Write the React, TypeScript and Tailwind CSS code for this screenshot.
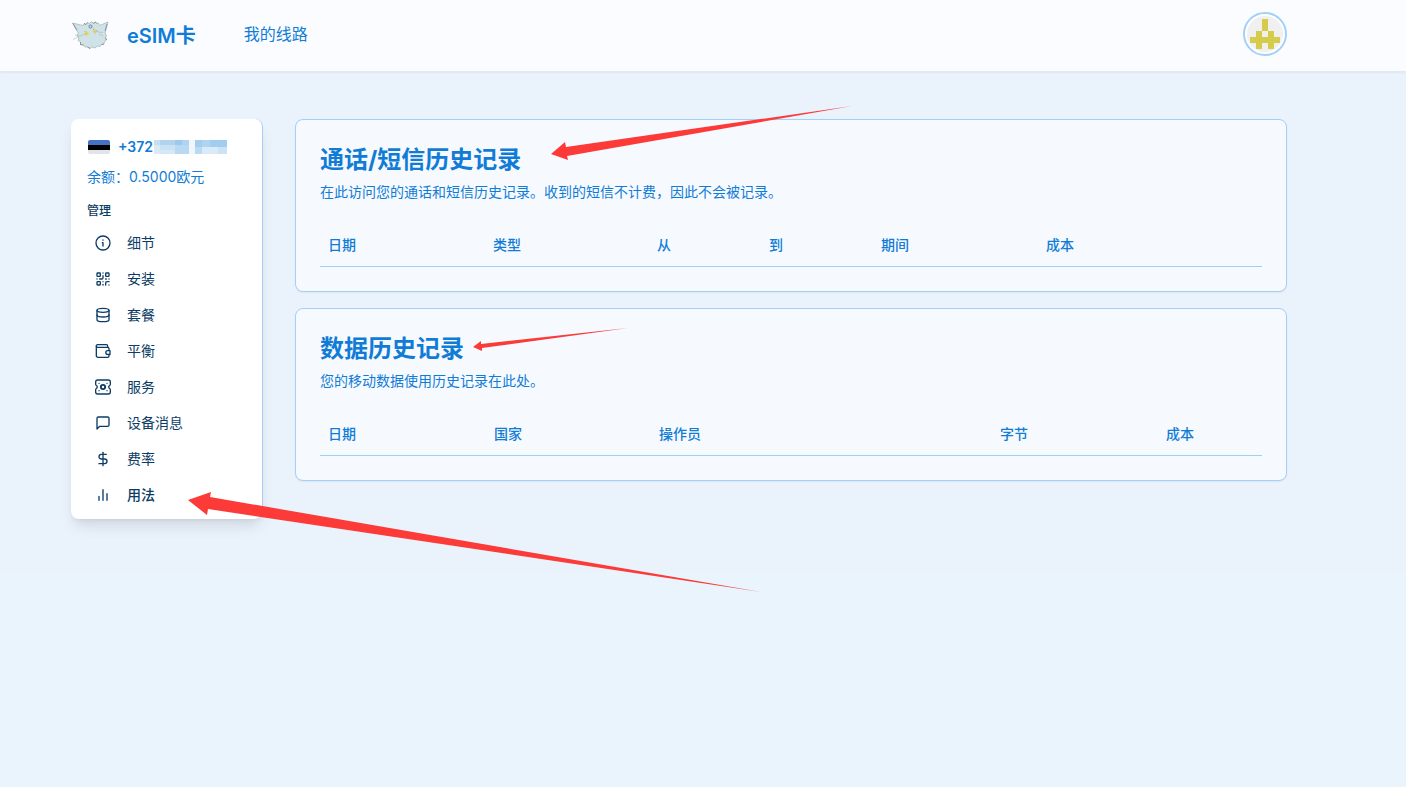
import type { ReactNode } from "react";
import { Database, DollarSign, QrCode } from "lucide-react";

interface NavItem {
  label: string;
  icon: ReactNode;
  active?: boolean;
}

interface Column {
  label: string;
  width: string;
}

interface HistoryCardProps {
  title: string;
  description: string;
  columns: Column[];
}

function LineIcon({ children }: { children: ReactNode }) {
  return (
    <svg
      viewBox="0 0 24 24"
      className="w-4 h-4"
      fill="none"
      stroke="currentColor"
      strokeWidth="2"
      strokeLinecap="round"
      strokeLinejoin="round"
      aria-hidden="true"
    >
      {children}
    </svg>
  );
}

const navItems: NavItem[] = [
  {
    label: "细节",
    icon: (
      <LineIcon>
        <circle cx="12" cy="12" r="10.5" />
        <path d="M11 11.5h1v5M12 7.5v.2" />
      </LineIcon>
    ),
  },
  { label: "安装", icon: <QrCode className="w-4 h-4" /> },
  { label: "套餐", icon: <Database className="w-4 h-4" /> },
  {
    label: "平衡",
    icon: (
      <LineIcon>
        <path d="M19 6V4.500a2 2 0 0 0-2-2H4a2 2 0 0 0-2 2V19a2.500 2.500 0 0 0 2.500 2.500H19a2 2 0 0 0 2-2V18" />
        <path d="M2 4.500a2 2 0 0 0 2 2h15a2 2 0 0 1 2 2v2" />
        <path d="M22.500 11.500H19a2.800 2.800 0 0 0 0 5.600h3.500z" />
      </LineIcon>
    ),
  },
  {
    label: "服务",
    icon: (
      <LineIcon>
        <path d="M4 1.500h16a3 3 0 0 1 3 3V8a2 2 0 0 1-1 1.700 2.600 2.600 0 0 0 0 4.600A2 2 0 0 1 23 16v3.500a3 3 0 0 1-3 3H4a3 3 0 0 1-3-3V16a2 2 0 0 1 1-1.700 2.600 2.600 0 0 0 0-4.600A2 2 0 0 1 1 8V4.500a3 3 0 0 1 3-3z" />
        <circle cx="12" cy="12" r="3.200" strokeWidth="2.800" />
        <path d="M6 6.500h.1M18 6.500h.1M6 17.500h.1M18 17.500h.1" />
      </LineIcon>
    ),
  },
  {
    label: "设备消息",
    icon: (
      <LineIcon>
        <path d="M21 15a2 2 0 0 1-2 2H7l-4 4V5a2 2 0 0 1 2-2h14a2 2 0 0 1 2 2z" />
      </LineIcon>
    ),
  },
  { label: "费率", icon: <DollarSign className="w-4 h-4" /> },
  {
    label: "用法",
    active: true,
    icon: (
      <LineIcon>
        <path d="M18 20V10M12 20V4M6 20v-6" />
      </LineIcon>
    ),
  },
];

const callColumns: Column[] = [
  { label: "日期", width: "w-[165px]" },
  { label: "类型", width: "w-[164px]" },
  { label: "从", width: "w-[112px]" },
  { label: "到", width: "w-[112px]" },
  { label: "期间", width: "w-[165px]" },
  { label: "成本", width: "w-auto" },
];

const dataColumns: Column[] = [
  { label: "日期", width: "w-[166px]" },
  { label: "国家", width: "w-[165px]" },
  { label: "操作员", width: "w-auto" },
  { label: "字节", width: "w-[166px]" },
  { label: "成本", width: "w-[104px]" },
];

function Logo() {
  return (
    <svg viewBox="0 0 38 32" className="w-[38px] h-8" aria-hidden="true">
      <path
        d="M1.500 5L12 7.500L13 5.500L15 6.500L16.500 4.500L18.500 5.500L20.500 3.500L22 5.500L24.500 4L25.500 5.500L27.500 5L28.500 7.500L37 4L35.500 10L34 15L35.500 18L34.500 19.500L35.500 22L33.500 23.500L33 26L30.500 26.500L29 28.500L26.500 28L24 30L21.500 29L19 30.500L16.500 29L14 29L12.500 27L9.500 26.500L9.500 24L7 22.500L8 20L6 17.500L7.500 15L5 11.500Z"
        fill="#cfe2e7"
        stroke="#a3afb1"
        strokeWidth="0.7"
      />
      <path
        d="M2 5.500L6 12M13 5.500l2 1 1.500-2M22 5.500l2.500-1.500 1 1.500M36 6l-2 7M9.500 24v2.500l3 .5M16.500 29l2.500 1.500M30.500 26.500l2.500-.5M34.500 19.500l1 2.500"
        fill="none"
        stroke="#7e8a8c"
        strokeWidth="0.8"
      />
      <path d="M2 21.500l6-3M4 17l5 1M9 18l5-2M27 14l5 .5M28 16l4 2" stroke="#a9b5b7" strokeWidth="0.6" />
      <circle cx="19.500" cy="8.500" r="1.500" fill="none" stroke="#66767e" strokeWidth="0.9" />
      <path d="M15.500 12.500l.9 2.200 1.900.8-1.900.9-.9 2.100-.9-2.100-1.900-.9 1.900-.8z" fill="#e8d03a" />
      <path d="M24 10.500l.8 2.200 2 .8-2 .9-.8 2.100-.8-2.100-2-.9 2-.8z" fill="#dccb60" />
      <path d="M13.500 13l1 1M22.500 10.500v1.500M25.500 12l1 1.500" stroke="#8a9086" strokeWidth="0.6" />
    </svg>
  );
}

function Avatar() {
  return (
    <button
      aria-label="账户"
      className="w-11 h-11 rounded-full border-2 border-[#a3d0f8] bg-white p-[2px] overflow-hidden"
    >
      <svg viewBox="0 0 36 36" className="w-full h-full rounded-full bg-[#f0f0f0]" shapeRendering="crispEdges">
        <path
          d="M15 3h6v12h-6zM9 15h6v6H9zM21 15h6v6h-6zM3 21h30v6H3zM9 27h6v6H9zM21 27h6v6h-6z"
          fill="#d5cc4b"
        />
      </svg>
    </button>
  );
}

function EstoniaFlag() {
  return (
    <svg viewBox="0 0 22 14" className="w-[22px] h-[14px] rounded-[2px]" aria-hidden="true">
      <rect width="22" height="5" fill="#4573c4" />
      <rect y="5" width="22" height="5" fill="#000000" />
      <rect y="10" width="22" height="4" fill="#e1e5e9" />
    </svg>
  );
}

// Masked part of the phone number
function MaskedNumber() {
  return (
    <svg viewBox="0 0 73 14" className="w-[73px] h-[14px]" shapeRendering="crispEdges" aria-hidden="true">
      <rect width="6" height="5" fill="#c5dff4" />
      <rect x="6" width="15" height="5" fill="#b0d3f0" />
      <rect x="21" width="7" height="5" fill="#9ccaee" />
      <rect x="28" width="7" height="5" fill="#afd3f1" />
      <rect y="5" width="6" height="9" fill="#dceaf7" />
      <rect x="6" y="5" width="15" height="5" fill="#c9e1f4" />
      <rect x="6" y="10" width="15" height="4" fill="#d6e8f7" />
      <rect x="21" y="5" width="14" height="9" fill="#b9d9f2" />
      <rect x="35" width="6" height="14" fill="#eff6fc" />
      <rect x="41" width="32" height="7" fill="#a2cdee" />
      <rect x="48" width="8" height="7" fill="#b0d4f0" />
      <rect x="41" y="7" width="7" height="7" fill="#b9daf2" />
      <rect x="48" y="7" width="16" height="7" fill="#dbeaf8" />
      <rect x="64" y="7" width="9" height="7" fill="#cce2f5" />
    </svg>
  );
}

function Sidebar() {
  return (
    <aside className="w-48 shrink-0 self-start rounded-lg border-r border-[#a3d0f8] bg-white shadow-lg px-4 pt-4 pb-[6px]">
      <div className="flex items-center h-6 pl-px">
        <EstoniaFlag />
        <span className="ml-2 text-sm font-semibold">+372</span>
        <span className="ml-px">
          <MaskedNumber />
        </span>
      </div>
      <p className="mt-[6px] text-sm leading-6">余额：0.5000欧元</p>
      <h2 className="mt-3 text-xs leading-5 font-medium text-[#0c3c66]">管理</h2>
      <nav className="mt-1">
        {navItems.map((item) => (
          <a
            key={item.label}
            href="#"
            className={`flex items-center gap-4 h-9 px-2 text-sm text-[#0c3c66] rounded-md ${
              item.active ? "font-medium" : "font-normal"
            }`}
          >
            {item.icon}
            {item.label}
          </a>
        ))}
      </nav>
    </aside>
  );
}

function HistoryCard({ title, description, columns }: HistoryCardProps) {
  return (
    <section className="rounded-lg border border-[#a3d0f8] bg-[#f6faff] shadow-xs p-6">
      <h3 className="text-2xl leading-8 font-bold">{title}</h3>
      <p className="mt-[6px] text-sm leading-5">{description}</p>
      <table className="mt-6 w-full table-fixed border-separate border-spacing-0 text-sm">
        <thead>
          <tr>
            {columns.map((column) => (
              <th
                key={column.label}
                className={`h-[41px] px-2 pb-[2px] text-left align-middle font-medium border-b border-[#9fd0f3] ${column.width}`}
              >
                {column.label}
              </th>
            ))}
          </tr>
        </thead>
      </table>
    </section>
  );
}

// Red pointer arrows drawn over the page
function Annotations() {
  return (
    <svg
      viewBox="0 0 860 600"
      className="absolute top-0 left-0 w-[860px] h-[600px] pointer-events-none"
      fill="#fc3a38"
      aria-hidden="true"
    >
      <path d="M551 154L565 142L566 147L852 106L567 156L568 160Z" />
      <path d="M473 347L481 341L481 344L628 328L482 348L482 351Z" />
      <path d="M188 500L211 492L210 497L761 592L208 509L207 515Z" />
    </svg>
  );
}

export default function App() {
  return (
    <div className="relative min-h-screen bg-[#e9f4fd] text-[#117cd6] font-['Inter','Noto_Sans_CJK_SC',sans-serif]">
      {/* Header */}
      <header className="relative bg-[#fbfcff] border-b border-[#e1eaf3] shadow-xs pr-12">
        <div className="max-w-7xl mx-auto px-8 pt-3 pb-[15px] flex items-center">
          <a href="#" className="flex items-end gap-[18px] text-xl leading-7 font-semibold">
            <Logo />
            eSIM卡
          </a>
          <a href="#" className="ml-12 text-base">
            我的线路
          </a>
          <div className="ml-auto flex">
            <Avatar />
          </div>
        </div>
      </header>

      {/* Content */}
      <main className="bg-[#eaf2fc] pr-12">
        <div className="max-w-7xl mx-auto px-8 pt-[47px] pb-[53px] flex gap-8">
          <Sidebar />
          <div className="flex-1 min-w-0 flex flex-col gap-4">
            <HistoryCard
              title="通话/短信历史记录"
              description="在此访问您的通话和短信历史记录。收到的短信不计费，因此不会被记录。"
              columns={callColumns}
            />
            <HistoryCard
              title="数据历史记录"
              description="您的移动数据使用历史记录在此处。"
              columns={dataColumns}
            />
          </div>
        </div>
      </main>

      <Annotations />
    </div>
  );
}
